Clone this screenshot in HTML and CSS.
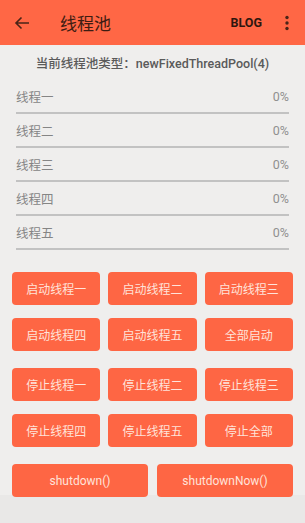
FILE: index.html
```html
<!DOCTYPE html>
<html lang="zh-CN">
<head>
    <meta charset="UTF-8">
    <meta name="viewport" content="width=device-width, initial-scale=1.0">
    <title>线程池</title>
    <link rel="stylesheet" href="styles.css">
</head>
<body>
    <div class="toolbar">
        <svg class="back" width="16" height="16" viewBox="0 0 16 16">
            <path d="M15 8H2M7.5 2.5L2 8l5.5 5.5" fill="none" stroke="#4a2417" stroke-width="1.6"/>
        </svg>
        <div class="title">线程池</div>
        <div class="blog">BLOG</div>
        <svg class="more" width="6" height="16" viewBox="0 0 6 16">
            <circle cx="3" cy="2.5" r="1.7" fill="#4a2417"/>
            <circle cx="3" cy="8" r="1.7" fill="#4a2417"/>
            <circle cx="3" cy="13.5" r="1.7" fill="#4a2417"/>
        </svg>
    </div>

    <div class="pool-type">当前线程池类型：newFixedThreadPool(4)</div>

    <div class="threads">
        <div class="thread">
            <div class="thread-info"><span>线程一</span><span class="percent">0%</span></div>
            <div class="thread-bar"></div>
        </div>
        <div class="thread">
            <div class="thread-info"><span>线程二</span><span class="percent">0%</span></div>
            <div class="thread-bar"></div>
        </div>
        <div class="thread">
            <div class="thread-info"><span>线程三</span><span class="percent">0%</span></div>
            <div class="thread-bar"></div>
        </div>
        <div class="thread">
            <div class="thread-info"><span>线程四</span><span class="percent">0%</span></div>
            <div class="thread-bar"></div>
        </div>
        <div class="thread">
            <div class="thread-info"><span>线程五</span><span class="percent">0%</span></div>
            <div class="thread-bar"></div>
        </div>
    </div>

    <div class="btn-group">
        <button>启动线程一</button>
        <button>启动线程二</button>
        <button>启动线程三</button>
        <button>启动线程四</button>
        <button>启动线程五</button>
        <button>全部启动</button>
    </div>
    <div class="btn-group">
        <button>停止线程一</button>
        <button>停止线程二</button>
        <button>停止线程三</button>
        <button>停止线程四</button>
        <button>停止线程五</button>
        <button>停止全部</button>
    </div>
    <div class="btn-group two">
        <button>shutdown()</button>
        <button>shutdownNow()</button>
    </div>
</body>
</html>
```

FILE: styles.css
```css
body {
    margin: 0;
    width: 305px;
    min-height: 523px;
    font-family: Roboto, "Noto Sans CJK SC", sans-serif;
    background: linear-gradient(to bottom, #efeeed 495px, #e9e8e7 495px);
}
.toolbar {
    height: 45px;
    background-color: #ff6745;
    display: flex;
    align-items: center;
}
.back {
    margin-left: 14px;
}
.title {
    margin-left: 30px;
    font-size: 17px;
    color: #3d1c12;
    flex: 1;
}
.blog {
    font-size: 12.5px;
    font-weight: bold;
    color: #2e160e;
}
.more {
    margin-left: 22px;
    margin-right: 15px;
}
.pool-type {
    margin-top: 10px;
    line-height: 17px;
    text-align: center;
    font-size: 12.5px;
    font-weight: 500;
    color: #5a5a5a;
}
.threads {
    margin-top: 8px;
    padding: 0 16px;
}
.thread-info {
    height: 32px;
    display: flex;
    justify-content: space-between;
    align-items: center;
    font-size: 12.5px;
    color: #858585;
}
.percent {
    color: #909090;
}
.thread-bar {
    height: 2px;
    background-color: #c2c2c2;
}
.btn-group {
    display: grid;
    grid-template-columns: 1fr 1fr 1fr;
    column-gap: 8px;
    row-gap: 13px;
    padding: 0 12px;
    margin-top: 17px;
}
.threads + .btn-group {
    margin-top: 22px;
}
.btn-group.two {
    grid-template-columns: 1fr 1fr;
    column-gap: 9px;
}
.btn-group button {
    height: 33px;
    border: none;
    border-radius: 4px;
    background-color: #fe6644;
    color: #ffe3da;
    font-family: Roboto, "Noto Sans CJK SC", sans-serif;
    font-size: 12px;
    padding: 0;
}
```
